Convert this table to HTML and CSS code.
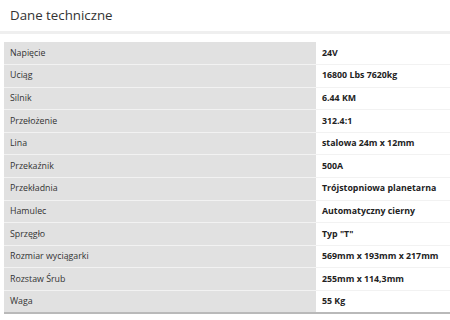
FILE: index.html
```html
<!DOCTYPE html>
<html lang="pl">
<head>
<meta charset="utf-8">
<link rel="stylesheet" href="styles.css">
</head>
<body>
<div class="page">
  <h2 class="title">Dane techniczne</h2>
  <div class="rule"></div>
  <table class="specs">
    <tbody>
      <tr><td class="label">Napięcie</td><td class="value">24V</td></tr>
      <tr><td class="label">Uciąg</td><td class="value">16800 Lbs 7620kg</td></tr>
      <tr><td class="label">Silnik</td><td class="value">6.44 KM</td></tr>
      <tr><td class="label">Przełożenie</td><td class="value">312.4:1</td></tr>
      <tr><td class="label">Lina</td><td class="value">stalowa 24m x 12mm</td></tr>
      <tr><td class="label">Przekaźnik</td><td class="value">500A</td></tr>
      <tr><td class="label">Przekładnia</td><td class="value">Trójstopniowa planetarna</td></tr>
      <tr><td class="label">Hamulec</td><td class="value">Automatyczny cierny</td></tr>
      <tr><td class="label">Sprzęgło</td><td class="value">Typ "T"</td></tr>
      <tr><td class="label">Rozmiar wyciągarki</td><td class="value">569mm x 193mm x 217mm</td></tr>
      <tr><td class="label">Rozstaw Śrub</td><td class="value">255mm x 114,3mm</td></tr>
      <tr><td class="label">Waga</td><td class="value">55 Kg</td></tr>
    </tbody>
  </table>
</div>
</body>
</html>
```
FILE: styles.css
```css
html, body {
  margin: 0;
  padding: 0;
  background: #ffffff;
  overflow: hidden;
}
body {
  font-family: "Open Sans", "Noto Sans", sans-serif;
  color: #333;
}
.page {
  width: 450px;
}
.title {
  margin: 0;
  padding: 5px 0 0 10px;
  height: 28px;
  box-sizing: border-box;
  font-size: 13.3px;
  font-weight: 400;
  color: #333;
  line-height: 20px;
}
.rule {
  height: 3px;
  margin-top: 3px;
  background: #efefef;
}
.specs {
  margin: 8px 0 0 4px;
  border-collapse: collapse;
  table-layout: fixed;
  width: 446px;
  border-bottom: 2px solid #b9b9b9;
}
.specs td {
  height: 22.6px;
  padding: 0 6px;
  font-size: 8.8px;
  line-height: 13px;
  box-sizing: border-box;
  border-top: 1px solid #f2f2f2;
  vertical-align: middle;
  white-space: nowrap;
}
.specs tr:first-child td {
  border-top: none;
}
.label {
  width: 312px;
  background: #e1e1e1;
  color: #333;
}
.value {
  background: #ffffff;
  font-weight: 700;
  color: #222;
}
```
